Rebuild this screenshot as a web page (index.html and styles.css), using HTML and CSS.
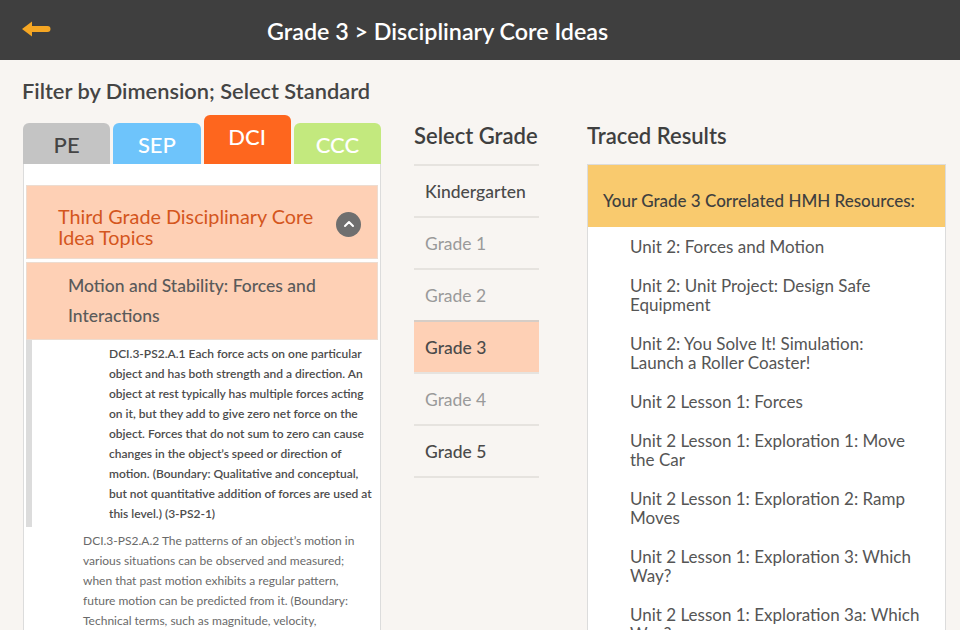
FILE: index.html
```html
<!DOCTYPE html>
<html lang="en">
<head>
<meta charset="utf-8">
<title>Grade 3 &gt; Disciplinary Core Ideas</title>
<link rel="stylesheet" href="styles.css">
</head>
<body>
<header class="topbar">
  <a class="back" href="#" aria-label="Back">
    <svg width="30" height="18" viewBox="0 0 30 18"><path d="M1 9 L11 1.5 V6 H26.5 A3 3 0 0 1 26.5 12 H11 V16.5 Z" fill="#f5a623"/></svg>
  </a>
  <h1 class="title">Grade 3 &gt; Disciplinary Core Ideas</h1>
</header>
<main class="page">
  <h2 class="filter-title">Filter by Dimension; Select Standard</h2>
  <div class="columns">
    <section class="col-left">
      <div class="tabs">
        <div class="tab tab-pe">PE</div>
        <div class="tab tab-sep">SEP</div>
        <div class="tab tab-dci">DCI</div>
        <div class="tab tab-ccc">CCC</div>
      </div>
      <div class="panel">
        <div class="acc acc-main">
          <span class="acc-title">Third Grade Disciplinary Core Idea Topics</span>
          <span class="chev"><svg width="12" height="8" viewBox="0 0 12 8"><path d="M2 6 L6 2 L10 6" fill="none" stroke="#fff" stroke-width="2" stroke-linecap="round" stroke-linejoin="round"/></svg></span>
        </div>
        <div class="acc acc-sub">Motion and Stability: Forces and Interactions</div>
        <div class="std std-active">DCI.3-PS2.A.1 Each force acts on one particular object and has both strength and a direction. An object at rest typically has multiple forces acting on it, but they add to give zero net force on the object. Forces that do not sum to zero can cause changes in the object’s speed or direction of motion. (Boundary: Qualitative and conceptual, but not quantitative addition of forces are used at this level.) (3-PS2-1)</div>
        <div class="std std-next">DCI.3-PS2.A.2 The patterns of an object’s motion in various situations can be observed and measured; when that past motion exhibits a regular pattern, future motion can be predicted from it. (Boundary: Technical terms, such as magnitude, velocity, momentum, and vector quantity, are not introduced at this level.)</div>
      </div>
    </section>
    <section class="col-mid">
      <h3 class="col-title">Select Grade</h3>
      <ul class="grades">
        <li class="grade dark">Kindergarten</li>
        <li class="grade">Grade 1</li>
        <li class="grade">Grade 2</li>
        <li class="grade selected">Grade 3</li>
        <li class="grade">Grade 4</li>
        <li class="grade dark">Grade 5</li>
      </ul>
    </section>
    <section class="col-right">
      <h3 class="col-title">Traced Results</h3>
      <div class="results">
        <div class="results-head">Your Grade 3 Correlated HMH Resources:</div>
        <ul class="result-list">
          <li>Unit 2: Forces and Motion</li>
          <li>Unit 2: Unit Project: Design Safe Equipment</li>
          <li>Unit 2: You Solve It! Simulation: Launch a Roller Coaster!</li>
          <li>Unit 2 Lesson 1: Forces</li>
          <li>Unit 2 Lesson 1: Exploration 1: Move the Car</li>
          <li>Unit 2 Lesson 1: Exploration 2: Ramp Moves</li>
          <li>Unit 2 Lesson 1: Exploration 3: Which Way?</li>
          <li>Unit 2 Lesson 1: Exploration 3a: Which Way?</li>
        </ul>
      </div>
    </section>
  </div>
</main>
</body>
</html>
```
FILE: styles.css
```css
* { box-sizing: border-box; }
html, body { margin: 0; padding: 0; }
body {
  width: 960px;
  height: 630px;
  overflow: hidden;
  background: #f8f5f2;
  font-family: Lato, "Open Sans", sans-serif;
  color: #444;
}
.topbar {
  height: 60px;
  background: #3f3f3f;
  display: flex;
  align-items: center;
  padding-left: 21px;
}
.back { display: flex; width: 30px; height: 18px; margin-top: -3px; }
.title {
  margin: 1px 0 0 216px;
  font-size: 23.3px;
  font-weight: 600;
  color: #fff;
  line-height: 28px;
}
.page { padding: 18px 14px 0 22px; }
.filter-title {
  margin: 0;
  font-size: 21.8px;
  font-weight: 600;
  line-height: 26px;
  color: #444;
}
.columns {
  margin-top: 11px;
  margin-left: 1px;
  display: flex;
  align-items: flex-start;
}
.col-left { width: 358px; flex: none; }
.col-mid { width: 125px; flex: none; margin-left: 33px; }
.col-right { width: 359px; flex: none; margin-left: 48px; }
.tabs {
  height: 49px;
  display: flex;
  align-items: flex-end;
  gap: 3px;
}
.tab {
  flex: 1;
  height: 41px;
  border-radius: 6px 6px 0 0;
  display: flex;
  align-items: center;
  justify-content: center;
  font-size: 22px;
  font-weight: 500;
  color: #fff;
  padding-top: 1px;
}
.tab-pe { background: #c4c4c4; color: #454545; }
.tab-sep { background: #6ec4fb; }
.tab-dci { background: #fe661e; height: 49px; padding-top: 0; padding-bottom: 7px; }
.tab-ccc { background: #c3e97e; }
.panel {
  background: #fff;
  border-left: 1px solid #dcdcdc;
  border-right: 1px solid #dcdcdc;
  padding: 21px 2px 0 2px;
  height: 470px;
  overflow: hidden;
}
.acc {
  background: #fed0b5;
  border: 1px solid #eddcd0;
}
.acc-main {
  display: flex;
  align-items: center;
  justify-content: space-between;
  padding: 20px 16px 10px 31px;
  height: 74px;
}
.acc-title {
  width: 270px;
  font-size: 19.8px;
  line-height: 21px;
  color: #d4561d;
}
.chev {
  width: 25px;
  height: 25px;
  border-radius: 50%;
  background: #6f6f6f;
  display: flex;
  align-items: center;
  justify-content: center;
  margin-top: -6px;
}
.chev svg { margin-top: -1px; }
.acc-sub {
  margin-top: 3px;
  height: 78px;
  padding: 8px 20px 0 41px;
  font-size: 17.5px;
  line-height: 29.5px;
  color: #5a5a5a;
  font-weight: 500;
}
.std {
  font-size: 12px;
  line-height: 20px;
  color: #6a6a6a;
}
.std-active {
  border-left: 6px solid #dcdcdc;
  padding: 4px 2px 3px 77px;
  color: #4c4c4c;
  font-weight: 600;
}
.std-next { padding: 4px 10px 0 57px; }
.col-title {
  margin: 0;
  height: 49px;
  padding-top: 8px;
  font-size: 22px;
  line-height: 26px;
  font-weight: 600;
  color: #3f3f3f;
}
.grades { list-style: none; margin: 0; padding: 0; border-bottom: 2px solid #e6e3df; }
.grade {
  height: 52px;
  border-top: 2px solid #e6e3df;
  padding-left: 11px;
  display: flex;
  align-items: center;
  font-size: 17.5px;
  color: #9a9a9a;
}
.grade.dark { color: #4a4a4a; font-weight: 500; }
.grade.selected { background: #fed0b5; color: #4a4a4a; border-top-color: #d6cdc6; font-weight: 500; }
.results {
  background: #fff;
  border: 1px solid #dcdcdc;
  border-bottom: 0;
  height: 470px;
  overflow: hidden;
}
.results-head {
  background: #f9ca6e;
  height: 62px;
  padding: 26px 16px 0 15px;
  font-size: 17px;
  line-height: 20px;
  color: #3f3f3f;
  font-weight: 500;
}
.result-list {
  list-style: none;
  margin: 0;
  padding: 10px 24px 0 42px;
}
.result-list li {
  font-size: 17px;
  line-height: 19px;
  color: #555;
  margin-bottom: 20px;
}
```
